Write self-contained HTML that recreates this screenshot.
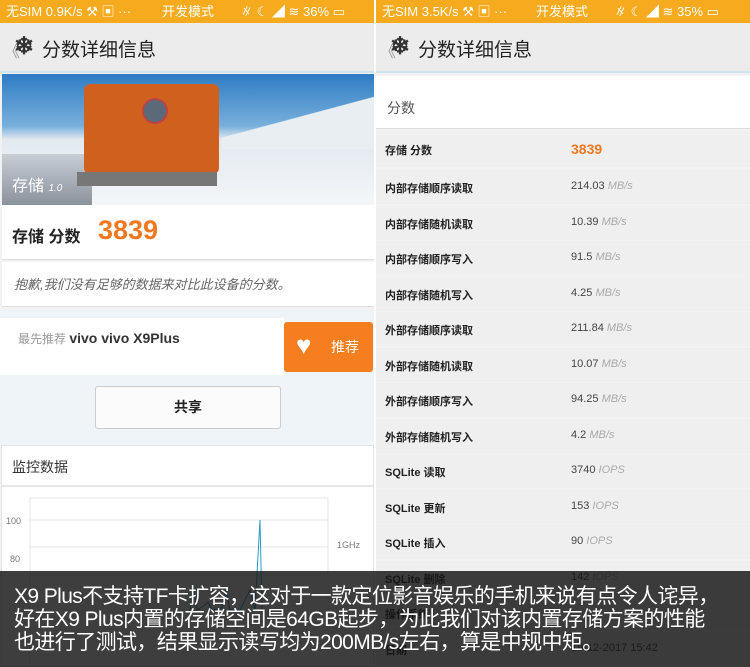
<!DOCTYPE html><html><head><meta charset="utf-8"><style>
*{margin:0;padding:0;box-sizing:border-box}
body{width:750px;height:667px;overflow:hidden;position:relative;background:#f2f2f2;font-family:"Liberation Sans","Noto Sans CJK SC",sans-serif}
.p{position:absolute;top:0;width:375px;height:667px;overflow:hidden}
.sb{position:absolute;top:0;left:0;width:375px;height:23px;background:#f6ab1e;color:#fff;font-size:13px;line-height:23px}
.hd{position:absolute;top:23px;left:0;width:375px;height:50px;background:#ececec;border-bottom:2px solid #cfe6f0}
.hd span{position:absolute;left:42px;top:12px;font-size:19px;color:#222}
.hd i{position:absolute;left:4px;top:15px;font-style:normal;color:#999;font-size:16px}
.hd b{position:absolute;left:14px;top:9px;font-size:24px;color:#333}
.a{position:absolute}
.row{position:absolute;left:0;width:375px;height:34px;background:#efefef;font-size:11px;font-weight:bold;color:#222}
.row .k{position:absolute;left:9px;top:10px}
.row .v{position:absolute;left:195px;top:10px;font-weight:normal;color:#444}
.row .v em{color:#aaa}
</style></head><body>
<div class="p" style="left:0">
<div class="sb"><span style="margin-left:6px">无SIM 0.9K/s ⚒ ▣ ···</span><span style="position:absolute;left:162px">开发模式</span><span style="position:absolute;left:240px">∦ ☾ ◢ ≋ 36% ▭</span></div>
<div class="hd"><i>《</i><b>❄</b><span>分数详细信息</span></div>
<div class="a" style="top:74px;left:2px;width:372px;height:131px;background:linear-gradient(#2f7cc4 0%,#79b0dc 40%,#e2e9f0 50%,#f4f6f8 100%)">
<div class="a" style="left:220px;top:20px;width:152px;height:55px;background:linear-gradient(165deg,transparent 45%,#e9eef3 46%)"></div>
<div class="a" style="left:0;top:80px;width:90px;height:51px;background:linear-gradient(#c8ced6,#8a929c)"></div>
<div class="a" style="left:82px;top:10px;width:135px;height:90px;background:#d0601e;border-radius:6px"></div>
<div class="a" style="left:140px;top:24px;width:26px;height:26px;border-radius:50%;background:#5a6a78;border:2px solid #b44"></div>
<div class="a" style="left:75px;top:98px;width:140px;height:14px;background:#777"></div>
<div class="a" style="left:10px;top:98px;color:#fff;font-size:16px">存储 <i style="font-size:10px">1.0</i></div>
</div>
<div class="a" style="top:205px;left:2px;width:372px;height:55px;background:#fff;border-bottom:1px solid #ddd"><span class="a" style="left:10px;top:18px;font-size:16px;font-weight:bold;color:#222">存储 分数</span><span class="a" style="left:96px;top:10px;font-size:27px;font-weight:bold;color:#f07820">3839</span></div>
<div class="a" style="top:262px;left:2px;width:372px;height:45px;background:#fff;border-bottom:1px solid #ddd"><span class="a" style="left:12px;top:12px;font-size:13px;color:#666;font-style:italic">抱歉,我们没有足够的数据来对比此设备的分数。</span></div>
<div class="a" style="top:310px;left:0;width:375px;height:135px;background:#eef4f8"></div>
<div class="a" style="top:318px;left:0;width:284px;height:57px;background:#fff"><span class="a" style="left:18px;top:12px;font-size:12px;color:#999">最先推荐 <b style="color:#333;font-size:14px">vivo vivo X9Plus</b></span></div>
<div class="a" style="top:322px;left:284px;width:89px;height:50px;background:#f57f1f;border-radius:3px;color:#fff"><span class="a" style="left:12px;top:8px;font-size:26px">♥</span><span class="a" style="left:47px;top:15px;font-size:14px">推荐</span></div>
<div class="a" style="top:386px;left:95px;width:186px;height:43px;background:#fbfbfb;border:1px solid #ccc;border-radius:3px;text-align:center;line-height:41px;font-size:14px;font-weight:bold;color:#222">共享</div>
<div class="a" style="top:445px;left:1px;width:373px;height:222px;background:#fff;border:1px solid #e4e4e4"></div>
<div class="a" style="top:485px;left:1px;width:373px;height:2px;background:#e6e6e6"></div>
<span class="a" style="top:457px;left:12px;font-size:14px;color:#333">监控数据</span>
<svg class="a" style="top:490px;left:0" width="375" height="180"><g stroke="#e5e5e5" fill="none"><rect x="30" y="8" width="298" height="170"/><line x1="30" y1="30" x2="328" y2="30"/><line x1="30" y1="57" x2="328" y2="57"/><line x1="30" y1="84" x2="328" y2="84"/></g><text x="6" y="34" font-size="9" fill="#777">100</text><text x="10" y="72" font-size="9" fill="#777">80</text><text x="337" y="58" font-size="9" fill="#777">1GHz</text><polyline points="190,120 193,95 197,120 205,115 208,112 212,120 222,118 226,100 230,120 240,120 250,100 255,120 260,30 262,120" stroke="#2a9ac8" fill="none"/></svg>
</div>
<div class="a" style="left:374px;top:0;width:2px;height:667px;background:#fff"></div>
<div class="p" style="left:376px">
<div class="sb"><span style="margin-left:6px">无SIM 3.5K/s ⚒ ▣ ···</span><span style="position:absolute;left:160px">开发模式</span><span style="position:absolute;left:238px">∦ ☾ ◢ ≋ 35% ▭</span></div>
<div class="hd"><i>《</i><b>❄</b><span>分数详细信息</span></div>
<div class="a" style="top:76px;left:0;width:374px;height:53px;background:#fff;border-bottom:1px solid #ddd"><span class="a" style="left:11px;top:22px;font-size:14px;color:#555">分数</span></div>
<div class="row" style="top:131px;height:36px"><span class="k" style="top:11px">存储 分数</span><span class="v" style="color:#f07820;font-size:14px;font-weight:bold;top:10px">3839</span></div>
<div class="row" style="top:170px"><span class="k">内部存储顺序读取</span><span class="v">214.03 <em>MB/s</em></span></div>
<div class="row" style="top:205.5px"><span class="k">内部存储随机读取</span><span class="v">10.39 <em>MB/s</em></span></div>
<div class="row" style="top:241px"><span class="k">内部存储顺序写入</span><span class="v">91.5 <em>MB/s</em></span></div>
<div class="row" style="top:276.5px"><span class="k">内部存储随机写入</span><span class="v">4.25 <em>MB/s</em></span></div>
<div class="row" style="top:312px"><span class="k">外部存储顺序读取</span><span class="v">211.84 <em>MB/s</em></span></div>
<div class="row" style="top:347.5px"><span class="k">外部存储随机读取</span><span class="v">10.07 <em>MB/s</em></span></div>
<div class="row" style="top:383px"><span class="k">外部存储顺序写入</span><span class="v">94.25 <em>MB/s</em></span></div>
<div class="row" style="top:418.5px"><span class="k">外部存储随机写入</span><span class="v">4.2 <em>MB/s</em></span></div>
<div class="row" style="top:454px"><span class="k">SQLite 读取</span><span class="v">3740 <em>IOPS</em></span></div>
<div class="row" style="top:489.5px"><span class="k">SQLite 更新</span><span class="v">153 <em>IOPS</em></span></div>
<div class="row" style="top:525px"><span class="k">SQLite 插入</span><span class="v">90 <em>IOPS</em></span></div>
<div class="row" style="top:560.5px"><span class="k">SQLite 删除</span><span class="v">142 <em>IOPS</em></span></div>
<div class="row" style="top:596px"><span class="k">操作系统</span><span class="v"></span></div>
<div class="row" style="top:631.5px"><span class="k">日期</span><span class="v">19-12-2017 15:42</span></div>
</div>
<div class="a" style="left:0;top:571px;width:750px;height:96px;background:rgba(20,20,20,0.82)"></div>
<div class="a" style="left:14px;top:585px;width:730px;color:#fff;font-size:21px;line-height:23px;letter-spacing:-0.6px;font-family:'Liberation Sans Narrow','Liberation Sans','Noto Sans CJK SC',sans-serif">X9 Plus不支持TF卡扩容，这对于一款定位影音娱乐的手机来说有点令人诧异，<br>好在X9 Plus内置的存储空间是64GB起步，为此我们对该内置存储方案的性能<br>也进行了测试，结果显示读写均为200MB/s左右，算是中规中矩。</div>
</body></html>
